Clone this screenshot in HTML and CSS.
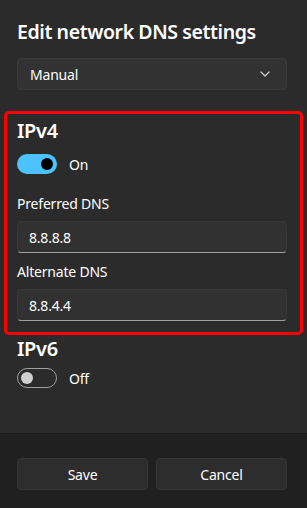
FILE: index.html
```html
<!DOCTYPE html>
<html>
<head>
<meta charset="utf-8">
<link rel="stylesheet" href="styles.css">
</head>
<body>
<div class="page">
  <main class="main">
    <h1 class="title">Edit network DNS settings</h1>
    <div class="select">
      <span>Manual</span>
      <svg class="chev" width="10" height="6" viewBox="0 0 10 6"><path d="M1 1 L5 5 L9 1" fill="none" stroke="#d0d0d0" stroke-width="1.2" stroke-linecap="round" stroke-linejoin="round"/></svg>
    </div>
    <section class="highlight">
      <h2 class="heading">IPv4</h2>
      <div class="toggle-row">
        <span class="toggle on"><span class="knob"></span></span>
        <span class="toggle-label">On</span>
      </div>
      <div class="label first">Preferred DNS</div>
      <div class="input">8.8.8.8</div>
      <div class="label">Alternate DNS</div>
      <div class="input">8.8.4.4</div>
    </section>
    <h2 class="heading v6">IPv6</h2>
    <div class="toggle-row off-row">
      <span class="toggle off"><span class="knob"></span></span>
      <span class="toggle-label">Off</span>
    </div>
  </main>
  <footer class="footer">
    <button class="btn">Save</button>
    <button class="btn">Cancel</button>
  </footer>
</div>
</body>
</html>
```
FILE: styles.css
```css
* { box-sizing: border-box; }
html, body { margin: 0; padding: 0; }
body {
  background: #2b2b2b;
  color: #ffffff;
  font-family: "Noto Sans", "Open Sans", sans-serif;
}
.page {
  width: 307px;
  height: 508px;
  display: flex;
  flex-direction: column;
}
.main {
  flex: 1;
  background: #2b2b2b;
}
.title {
  margin: 18px 17px 0 17px;
  font-size: 19.5px;
  line-height: 28px;
  font-weight: 600;
  letter-spacing: -0.4px;
}
.select {
  margin: 12px 20px 0 17px;
  height: 32px;
  background: #323232;
  border: 1px solid #393939;
  border-radius: 4px;
  display: flex;
  align-items: center;
  justify-content: space-between;
  padding: 0 16px 0 12px;
  font-size: 14px;
  letter-spacing: -0.2px;
}
.chev { display: block; }
.highlight {
  margin: 21px 4px 0 4px;
  border: 3px solid #ff0000;
  border-radius: 5px;
  padding: 3px 13px 11px 10px;
}
.heading {
  margin: 0;
  font-size: 20px;
  line-height: 28px;
  font-weight: 600;
  letter-spacing: -0.3px;
}
.v6 { margin: 0 17px; }
.toggle-row {
  margin-top: 9px;
  display: flex;
  align-items: center;
  gap: 12px;
  font-size: 14px;
  letter-spacing: -0.2px;
}
.off-row { margin: 5px 17px 0 17px; }
.toggle {
  width: 40px;
  height: 20px;
  border-radius: 10px;
  position: relative;
  display: block;
}
.toggle.on { background: #4cc2ff; }
.toggle.off { border: 1px solid #a0a0a0; }
.knob {
  position: absolute;
  top: 4px;
  width: 12px;
  height: 12px;
  border-radius: 50%;
}
.toggle.on .knob { right: 4px; background: #000000; }
.toggle.off .knob { left: 3px; top: 3px; background: #d0d0d0; }
.label {
  margin-top: 9px;
  font-size: 14px;
  line-height: 20px;
  letter-spacing: -0.2px;
}
.label.first { margin-top: 20px; }
.input {
  margin-top: 7px;
  height: 32px;
  background: #313131;
  border: 1px solid #373737;
  border-bottom: 1px solid #a0a0a0;
  border-radius: 4px;
  padding: 0 11px;
  display: flex;
  align-items: center;
  font-size: 14px;
  letter-spacing: -0.2px;
}
.footer {
  height: 75px;
  background: #202020;
  border-top: 1px solid #1c1c1c;
  padding: 24px 20px 0 17px;
  display: flex;
  gap: 8px;
  align-items: flex-start;
}
.btn {
  flex: 1;
  height: 32px;
  background: #2d2d2d;
  border: 1px solid #353535;
  border-radius: 4px;
  color: #ffffff;
  font-family: "Noto Sans", "Open Sans", sans-serif;
  font-size: 14px;
  letter-spacing: -0.2px;
}
```
